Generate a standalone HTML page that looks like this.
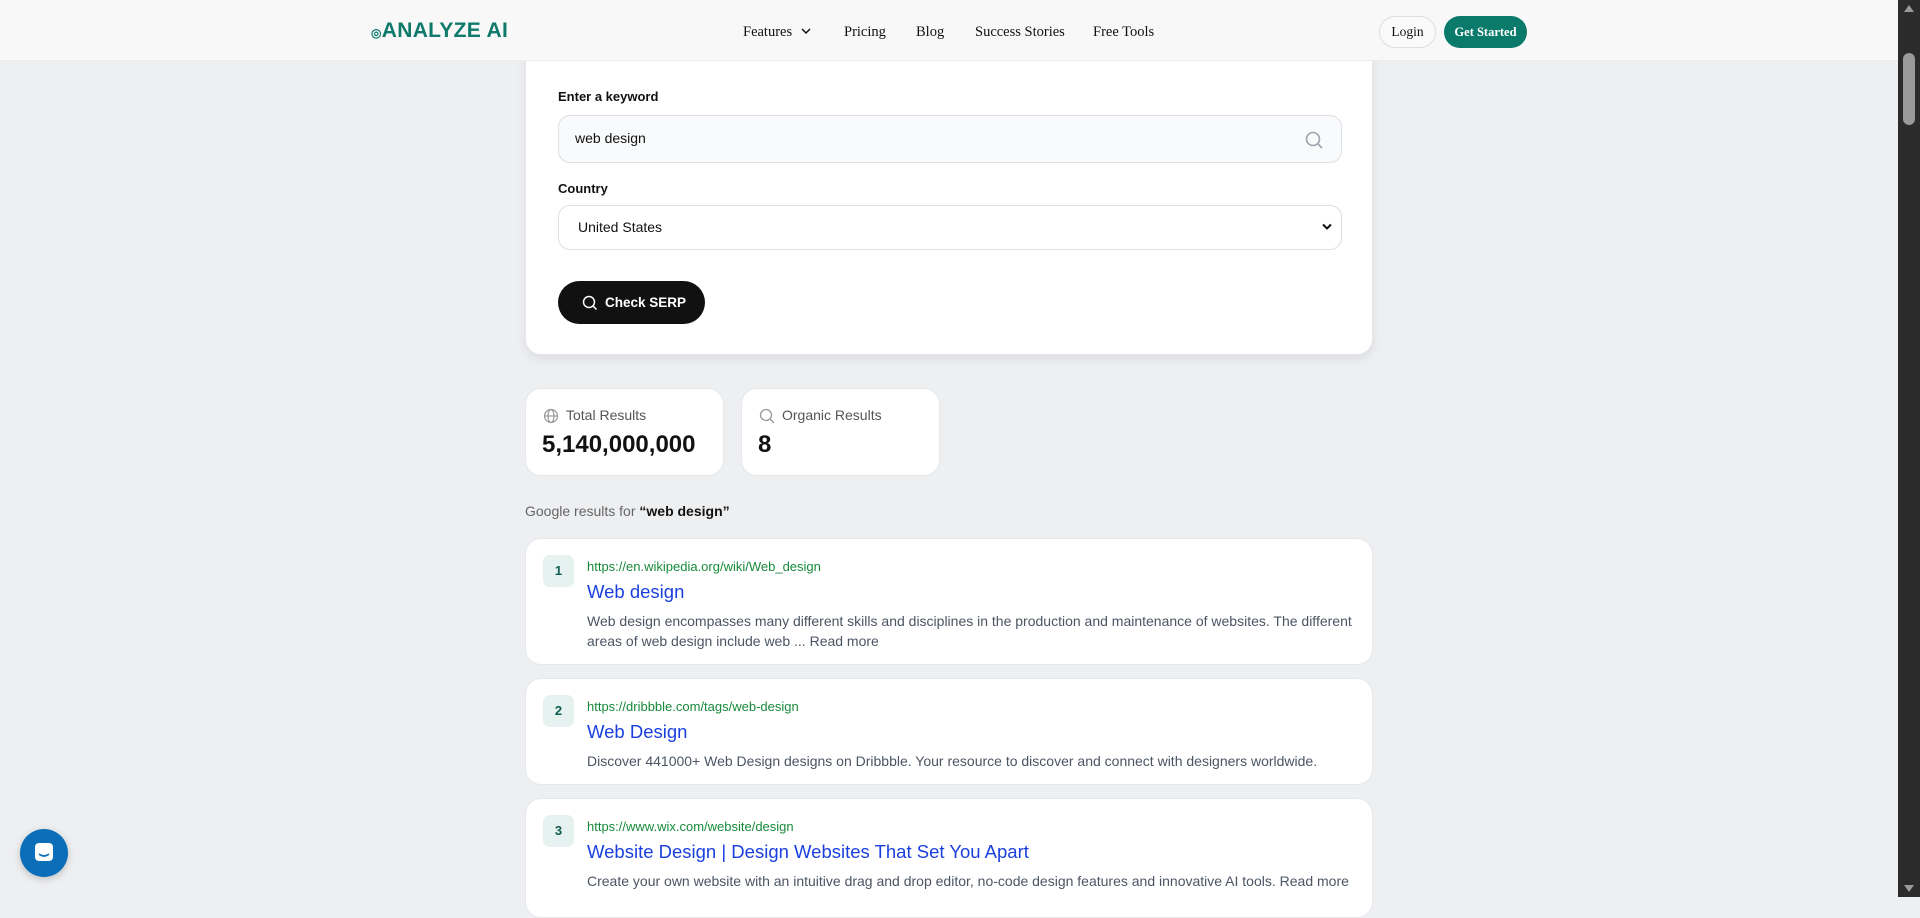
<!DOCTYPE html>
<html><head><meta charset="utf-8"><style>
*{box-sizing:border-box;margin:0;padding:0}
body{width:1920px;height:897px;overflow:hidden;background:#eeeff1;font-family:"Liberation Sans",sans-serif;position:relative;color:#111}
.nav{position:absolute;top:0;left:0;width:1898px;height:61px;background:#f8f8f8;z-index:5;border-bottom:1px solid #ececec}
.logo{position:absolute;left:371px;top:19px;font-size:21px;font-weight:700;color:#0f7a6c;letter-spacing:0.3px}
.logo small{font-size:12px}
.links{position:absolute;top:24px;font-family:"Liberation Serif",serif;font-size:14.5px;color:#111}
.links span{position:absolute;white-space:nowrap}
.login{position:absolute;left:1379px;top:16px;width:57px;height:32px;border:1px solid #ddd;border-radius:16px;background:#fafafa;font-family:"Liberation Serif",serif;font-size:13.5px;text-align:center;line-height:30px}
.gs{position:absolute;left:1444px;top:16px;width:83px;height:32px;border-radius:16px;background:#0a7a6a;color:#fff;font-family:"Liberation Serif",serif;font-weight:700;font-size:12.5px;text-align:center;line-height:32px}
.card{position:absolute;background:#fff;border-radius:16px;border:1px solid #e5e7eb}
.form{left:525px;top:40px;width:848px;height:315px;box-shadow:0 4px 10px rgba(0,0,0,.08)}
.lbl{position:absolute;left:32px;font-size:13px;font-weight:700;color:#111}
.inp{position:absolute;left:32px;width:784px;border:1px solid #dcdfe3;border-radius:12px;font-size:14px}
.btn{position:absolute;left:32px;top:240px;width:147px;height:43px;border-radius:22px;background:#111;color:#fff;font-size:13.5px;font-weight:700;line-height:43px;padding-left:47px}
.stat{top:388px;width:199px;height:88px}
.stat .t{position:absolute;left:40px;top:18px;font-size:14px;color:#555}
.stat .n{position:absolute;left:16px;top:42px;font-size:24px;font-weight:700}
.res{left:525px;width:848px}
.badge{position:absolute;left:17px;top:16px;width:31px;height:32px;background:#e6f2ef;border-radius:7px;color:#0f5c50;font-size:13px;font-weight:700;text-align:center;line-height:32px}
.url{position:absolute;left:61px;top:20px;font-size:13px;color:#178a3a}
.ttl{position:absolute;left:61px;top:42px;font-size:18.5px;color:#1a3fe0}
.desc{position:absolute;left:61px;top:72px;width:770px;font-size:14px;line-height:20px;color:#4b5563}
</style></head><body>
<div class="nav">
<div class="logo"><small>◎</small>ANALYZE AI</div>
<div class="links">
<span style="left:743px">Features <svg width="12" height="10" viewBox="0 0 12 10" style="margin-left:4px"><path d="M2 3l4 4 4-4" stroke="#111" stroke-width="1.5" fill="none"/></svg></span>
<span style="left:844px">Pricing</span><span style="left:916px">Blog</span><span style="left:975px">Success Stories</span><span style="left:1093px">Free Tools</span>
</div>
<div class="login">Login</div><div class="gs">Get Started</div>
</div>

<div class="card form">
<div class="lbl" style="top:48px">Enter a keyword</div>
<div class="inp" style="top:74px;height:48px;background:#f9fafb;padding:14px 0 0 16px">web design
<svg style="position:absolute;right:17px;top:14px" width="20" height="20" viewBox="0 0 20 20"><circle cx="9" cy="9" r="6.5" stroke="#9ca3af" stroke-width="1.6" fill="none"/><path d="M14 14l4 4" stroke="#9ca3af" stroke-width="1.6"/></svg></div>
<div class="lbl" style="top:140px">Country</div>
<div class="inp" style="top:164px;height:45px;background:#fff;padding:13px 0 0 19px">United States
<svg style="position:absolute;right:8px;top:16px" width="12" height="10" viewBox="0 0 12 10"><path d="M2 2.5l4 4 4-4" stroke="#111" stroke-width="2" fill="none"/></svg></div>
<div class="btn"><svg style="position:absolute;left:24px;top:14px" width="16" height="17" viewBox="0 0 16 17"><circle cx="7" cy="7" r="5.5" stroke="#fff" stroke-width="1.5" fill="none"/><path d="M11 11l3.5 3.5" stroke="#fff" stroke-width="1.5"/></svg>Check SERP</div>
</div>

<div class="card stat" style="left:525px"><svg style="position:absolute;left:17px;top:19px" width="16" height="16" viewBox="0 0 16 16" fill="none" stroke="#999" stroke-width="1.2"><circle cx="8" cy="8" r="6.5"/><ellipse cx="8" cy="8" rx="3" ry="6.5"/><path d="M1.5 8h13"/></svg><div class="t">Total Results</div><div class="n">5,140,000,000</div></div>
<div class="card stat" style="left:741px"><svg style="position:absolute;left:17px;top:19px" width="16" height="16" viewBox="0 0 16 16" fill="none" stroke="#999" stroke-width="1.3"><circle cx="7" cy="7" r="5.5"/><path d="M11 11l4 4"/></svg><div class="t">Organic Results</div><div class="n">8</div></div>

<div style="position:absolute;left:525px;top:503px;font-size:14px;color:#666">Google results for <b style="color:#111">“web design”</b></div>

<div class="card res" style="top:538px;height:127px"><div class="badge">1</div><div class="url">https://en.wikipedia.org/wiki/Web_design</div><div class="ttl">Web design</div><div class="desc">Web design encompasses many different skills and disciplines in the production and maintenance of websites. The different areas of web design include web ... Read more</div></div>
<div class="card res" style="top:678px;height:107px"><div class="badge">2</div><div class="url">https://dribbble.com/tags/web-design</div><div class="ttl">Web Design</div><div class="desc">Discover 441000+ Web Design designs on Dribbble. Your resource to discover and connect with designers worldwide.</div></div>
<div class="card res" style="top:798px;height:120px"><div class="badge">3</div><div class="url">https://www.wix.com/website/design</div><div class="ttl">Website Design | Design Websites That Set You Apart</div><div class="desc">Create your own website with an intuitive drag and drop editor, no-code design features and innovative AI tools. Read more</div></div>

<div style="position:absolute;left:20px;top:829px;width:48px;height:48px;border-radius:50%;background:#0a6fb8;box-shadow:0 2px 8px rgba(0,0,0,.2)"><svg style="position:absolute;left:14px;top:13px" width="20" height="22" viewBox="0 0 20 22"><rect x="1" y="1" width="18" height="18" rx="4" fill="#fff"/><path d="M5 12q5 4 10 0" stroke="#0a6fb8" stroke-width="1.6" fill="none"/></svg></div>

<div style="position:absolute;right:0;top:0;width:22px;height:897px;background:#2b2b2b"><div style="position:absolute;left:5px;top:53px;width:12px;height:72px;border-radius:6px;background:#9a9a9a"></div>
<div style="position:absolute;left:6px;top:5px;width:0;height:0;border-left:5px solid transparent;border-right:5px solid transparent;border-bottom:7px solid #9a9a9a"></div>
<div style="position:absolute;left:6px;bottom:5px;width:0;height:0;border-left:5px solid transparent;border-right:5px solid transparent;border-top:7px solid #9a9a9a"></div></div>
</body></html>
